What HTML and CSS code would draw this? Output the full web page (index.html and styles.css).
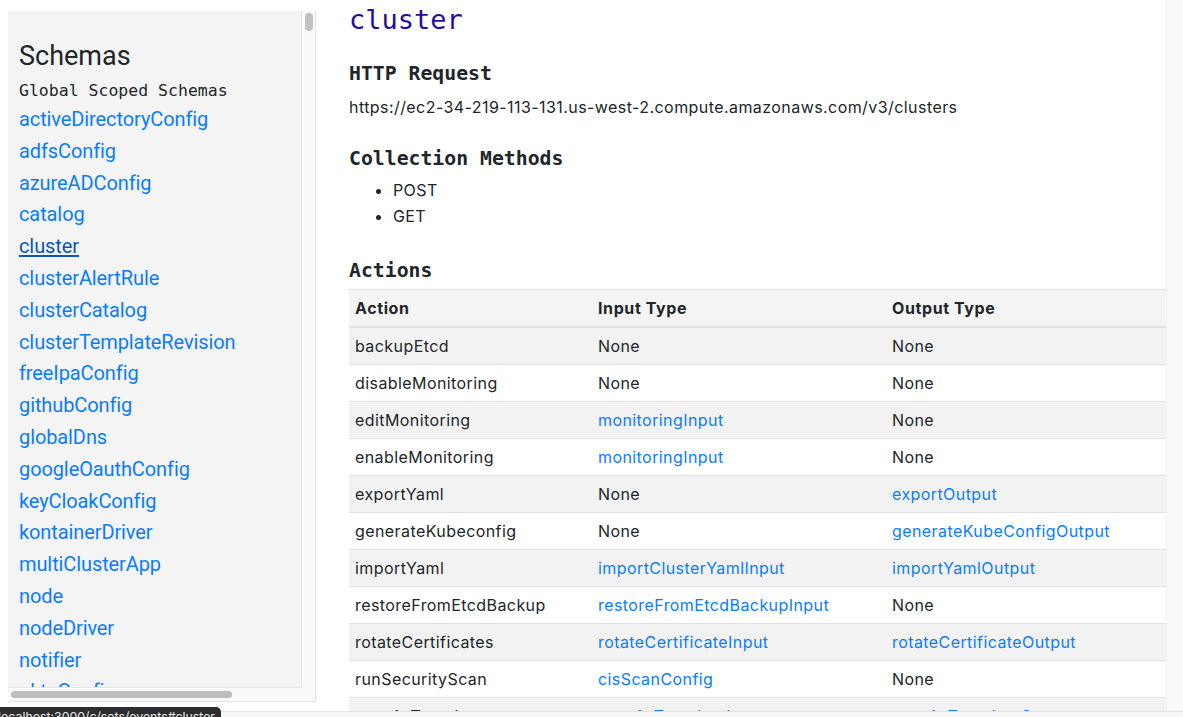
FILE: index.html
```html
<!DOCTYPE html>
<html lang="en">
<head>
<meta charset="utf-8">
<title>cluster</title>
<link rel="stylesheet" href="styles.css">
</head>
<body>
<div class="page">
  <div class="main">
    <aside class="sidebar">
      <div class="side-content">
        <h2 class="side-title">Schemas</h2>
        <div class="side-sub">Global Scoped Schemas</div>
        <nav class="side-links">
          <a href="#">activeDirectoryConfig</a>
          <a href="#">adfsConfig</a>
          <a href="#">azureADConfig</a>
          <a href="#">catalog</a>
          <a href="#" class="active">cluster</a>
          <a href="#">clusterAlertRule</a>
          <a href="#">clusterCatalog</a>
          <a href="#">clusterTemplateRevision</a>
          <a href="#">freeIpaConfig</a>
          <a href="#">githubConfig</a>
          <a href="#">globalDns</a>
          <a href="#">googleOauthConfig</a>
          <a href="#">keyCloakConfig</a>
          <a href="#">kontainerDriver</a>
          <a href="#">multiClusterApp</a>
          <a href="#">node</a>
          <a href="#">nodeDriver</a>
          <a href="#">notifier</a>
          <a href="#">oktaConfig</a>
          <a href="#">openLdapConfig</a>
          <a href="#">pingConfig</a>
        </nav>
      </div>
      <div class="vtrack"><div class="vthumb"></div></div>
      <div class="htrack"><div class="hthumb"></div></div>
      <div class="corner"></div>
    </aside>
    <section class="content">
      <h1 class="title">cluster</h1>
      <h3 class="sec sec-http">HTTP Request</h3>
      <p class="url">https://ec2-34-219-113-131.us-west-2.compute.amazonaws.com/v3/clusters</p>
      <h3 class="sec sec-coll">Collection Methods</h3>
      <ul class="methods">
        <li>POST</li>
        <li>GET</li>
      </ul>
      <h3 class="sec sec-act">Actions</h3>
      <table class="actions">
        <colgroup>
          <col class="c1"><col class="c2"><col class="c3">
        </colgroup>
        <thead>
          <tr><th>Action</th><th>Input Type</th><th>Output Type</th></tr>
        </thead>
        <tbody>
          <tr><td>backupEtcd</td><td>None</td><td>None</td></tr>
          <tr><td>disableMonitoring</td><td>None</td><td>None</td></tr>
          <tr><td>editMonitoring</td><td><a href="#">monitoringInput</a></td><td>None</td></tr>
          <tr><td>enableMonitoring</td><td><a href="#">monitoringInput</a></td><td>None</td></tr>
          <tr><td>exportYaml</td><td>None</td><td><a href="#">exportOutput</a></td></tr>
          <tr><td>generateKubeconfig</td><td>None</td><td><a href="#">generateKubeConfigOutput</a></td></tr>
          <tr><td>importYaml</td><td><a href="#">importClusterYamlInput</a></td><td><a href="#">importYamlOutput</a></td></tr>
          <tr><td>restoreFromEtcdBackup</td><td><a href="#">restoreFromEtcdBackupInput</a></td><td>None</td></tr>
          <tr><td>rotateCertificates</td><td><a href="#">rotateCertificateInput</a></td><td><a href="#">rotateCertificateOutput</a></td></tr>
          <tr><td>runSecurityScan</td><td><a href="#">cisScanConfig</a></td><td>None</td></tr>
          <tr><td>saveAsTemplate</td><td><a href="#">saveAsTemplateInput</a></td><td><a href="#">saveAsTemplateOutput</a></td></tr>
        </tbody>
      </table>
    </section>
  </div>
  <div class="page-vbar"></div>
  <div class="page-hbar"></div>
</div>
<div class="status">localhost:3000/c/sets/events#cluster</div>
</body>
</html>
```

FILE: styles.css
```css
html, body {
  margin: 0;
  padding: 0;
  width: 1183px;
  height: 717px;
  overflow: hidden;
  background: #ffffff;
}

body {
  font-family: "Inter", "Liberation Sans", sans-serif;
  color: #212529;
  position: relative;
}

.page {
  display: grid;
  grid-template-columns: 1166px 17px;
  grid-template-rows: 711px 6px;
  width: 1183px;
  height: 717px;
}

.main {
  grid-column: 1;
  grid-row: 1;
  display: flex;
  overflow: hidden;
}

.page-vbar {
  grid-column: 2;
  grid-row: 1;
  background: #fafafa;
  border-left: 1px solid #f0f0f0;
}

.page-hbar {
  grid-column: 1 / 3;
  grid-row: 2;
  background: #f7f7f7;
  border-top: 1px solid #e2e2e2;
}

/* Sidebar */
.sidebar {
  flex: none;
  margin: 11px 0 0 8px;
  width: 308px;
  height: 691px;
  display: grid;
  grid-template-columns: 294px 14px;
  grid-template-rows: 677px 14px;
}

.side-content {
  background: #f4f4f4;
  border-right: 1px solid #e4e4e4;
  border-bottom: 1px solid #e4e4e4;
  overflow: hidden;
  padding: 28px 0 0 11px;
  box-sizing: border-box;
  font-family: "Roboto", "Liberation Sans", sans-serif;
  white-space: nowrap;
}

.side-title {
  margin: 0;
  font-size: 27px;
  font-weight: 400;
  line-height: 34px;
  color: #212529;
}

.side-sub {
  margin-top: 6px;
  font-family: "DejaVu Sans Mono", "Liberation Mono", monospace;
  font-size: 16.5px;
  line-height: 24px;
  color: #212529;
}

.side-links {
  display: flex;
  flex-direction: column;
  padding-top: 1px;
}

.side-links a {
  display: block;
  font-size: 20px;
  line-height: 31.8px;
  color: #0a7cff;
  text-decoration: none;
  letter-spacing: -0.1px;
}

.side-links a.active {
  color: #0b56b3;
  text-decoration: underline;
  text-underline-offset: 2px;
}

.vtrack {
  background: #fafafa;
  border-right: 1px solid #e4e4e4;
  box-sizing: border-box;
  padding: 2px 0 0 3px;
}

.vthumb {
  width: 8px;
  height: 18px;
  border-radius: 4px;
  background: #c1c1c1;
}

.htrack {
  background: #fafafa;
  border-bottom: 1px solid #e4e4e4;
  box-sizing: border-box;
  padding: 3px 0 0 3px;
}

.hthumb {
  width: 221px;
  height: 7px;
  border-radius: 4px;
  background: #bdbdbd;
}

.corner {
  background: #fafafa;
  border-right: 1px solid #e4e4e4;
  border-bottom: 1px solid #e4e4e4;
  box-sizing: border-box;
}

/* Content */
.content {
  flex: 1;
  margin-left: 33px;
  padding-top: 2px;
  min-width: 0;
}

.title {
  margin: 0;
  font-family: "DejaVu Sans Mono", "Liberation Mono", monospace;
  font-size: 27px;
  font-weight: 400;
  line-height: 36px;
  color: #1f0f9c;
}

.sec {
  margin: 0;
  font-family: "DejaVu Sans Mono", "Liberation Mono", monospace;
  font-size: 19.8px;
  font-weight: 700;
  line-height: 24px;
  color: #212529;
}

.sec-http { margin-top: 24px; }
.sec-coll { margin-top: 28px; }
.sec-act { margin-top: 30px; }

.url {
  margin: 9px 0 0;
  font-size: 16px;
  line-height: 24px;
  letter-spacing: 0.43px;
}

.methods {
  margin: 6px 0 0;
  padding-left: 44px;
  font-size: 16px;
  line-height: 26px;
  letter-spacing: 0.4px;
}

.actions {
  margin-top: 6px;
  width: 817px;
  border-collapse: collapse;
  table-layout: fixed;
  font-size: 16px;
  letter-spacing: 0.42px;
}

.actions col.c1 { width: 243px; }
.actions col.c2 { width: 294px; }
.actions col.c3 { width: 280px; }

.actions th,
.actions td {
  height: 36px;
  padding: 0 6px;
  text-align: left;
  border-top: 1px solid #dee2e6;
  white-space: nowrap;
  line-height: 20px;
}

.actions thead th {
  background: #f4f4f4;
  font-weight: 700;
  border-bottom: 2px solid #dee2e6;
  letter-spacing: 0.6px;
}

.actions tbody tr:nth-child(odd) td {
  background: #f2f2f2;
}

.actions a {
  color: #0a7cff;
  text-decoration: none;
}

.status {
  position: absolute;
  left: 0;
  top: 707px;
  height: 20px;
  padding: 0 6px 0 0;
  text-indent: -2px;
  background: #2d2d30;
  border-top-right-radius: 5px;
  color: #e6e6e6;
  font-family: "Inter", "Liberation Sans", sans-serif;
  font-size: 12.3px;
  line-height: 20px;
  white-space: nowrap;
}
```
